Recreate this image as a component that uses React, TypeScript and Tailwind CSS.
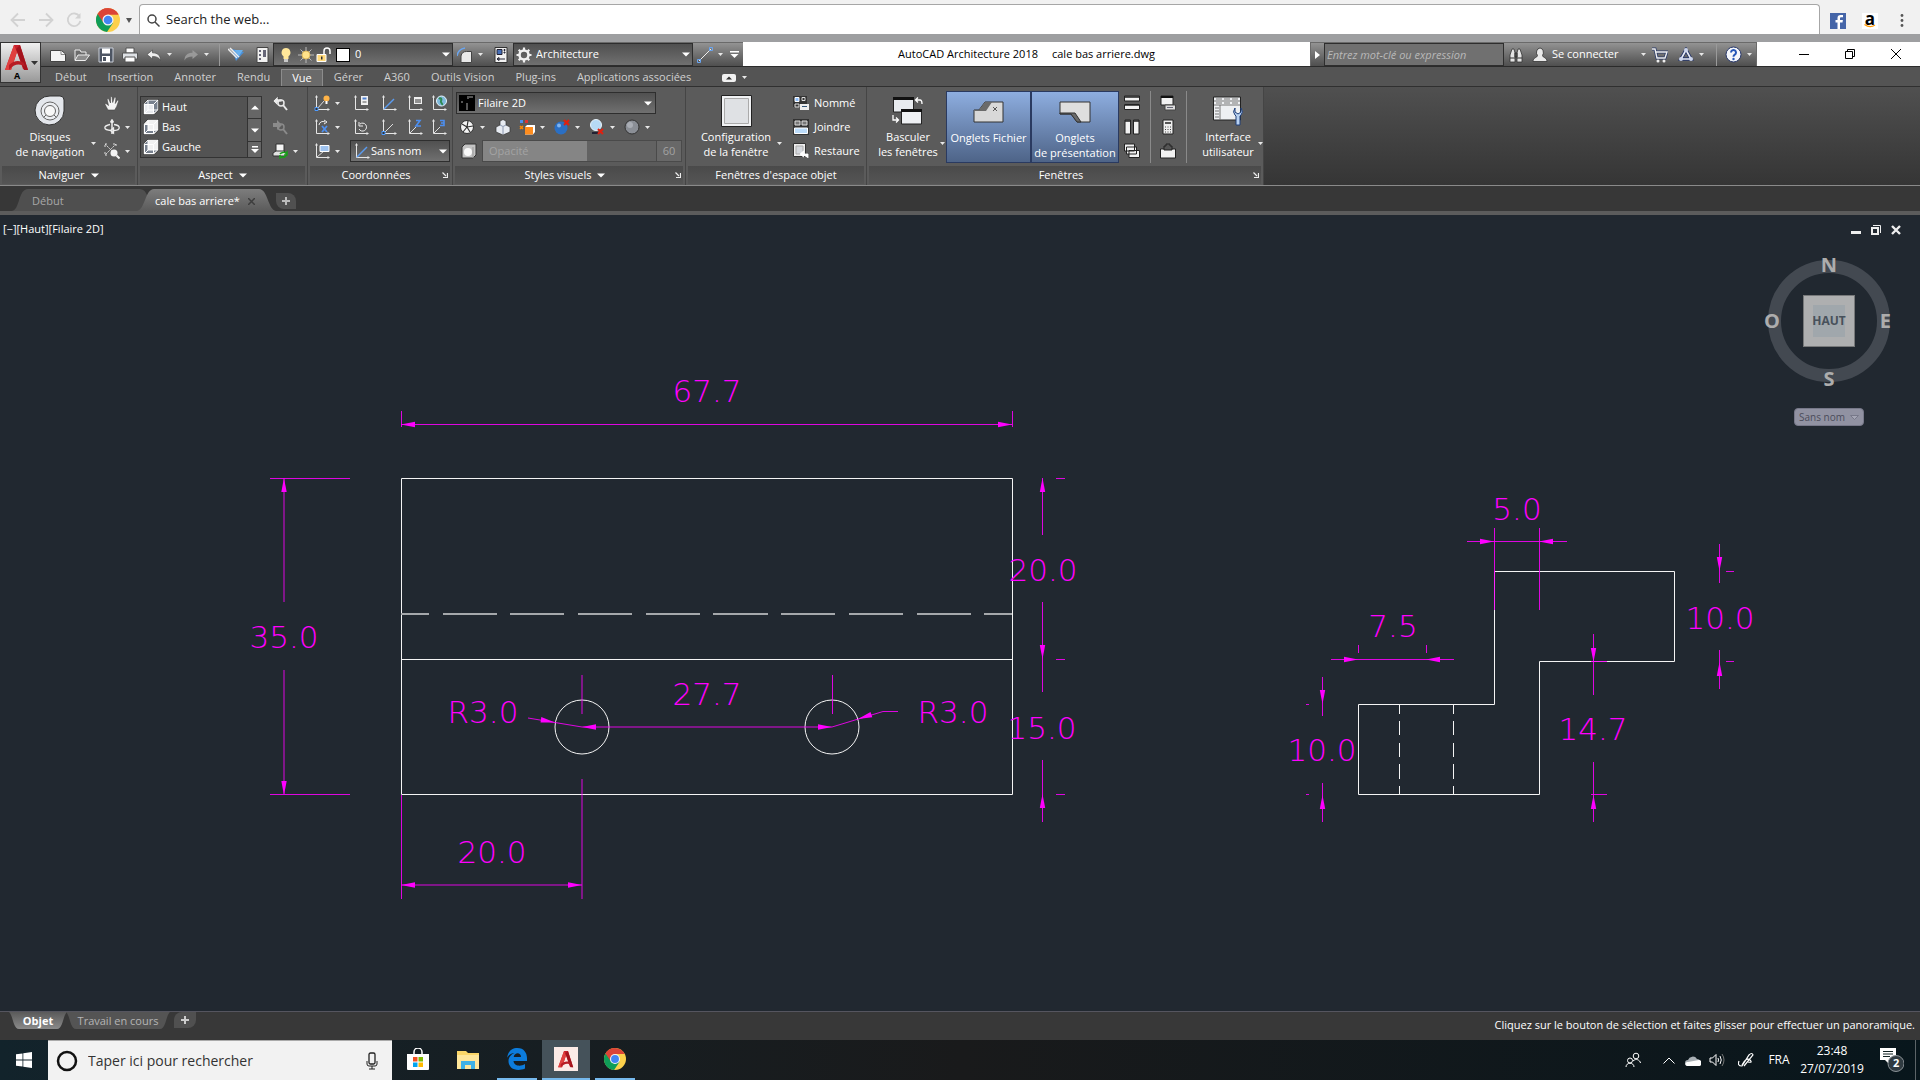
import React, { useState } from 'react'

type Kids = { children?: React.ReactNode }

function Ico({ children, s = 16 }: Kids & { s?: number }) {
  return <svg width={s} height={s} viewBox="0 0 16 16" fill="none" className="shrink-0" aria-hidden="true">{children}</svg>
}

function Caret({ big = false }: { big?: boolean }) {
  return big
    ? <svg width="8" height="5" viewBox="0 0 8 5" className="shrink-0" aria-hidden="true"><path d="M0 .5h8L4 4.5z" fill="#fff" /></svg>
    : <svg width="5" height="3" viewBox="0 0 5 3" className="shrink-0" aria-hidden="true"><path d="M0 0h5L2.500 3z" fill="#e8e8e8" /></svg>
}

function Btn({ label, children, className = 'w-6 h-6' }: Kids & { label: string; className?: string }) {
  return <button aria-label={label} className={'flex items-center justify-center shrink-0 ' + className}>{children}</button>
}

// icon button followed by its drop-down arrow
function Split({ label, children, className = 'w-[39px]' }: Kids & { label: string; className?: string }) {
  return <button aria-label={label} className={'flex items-center gap-[5px] pl-1 h-6 shrink-0 ' + className}>{children}<Caret /></button>
}

function Combo({ label, options, children, className }: Kids & { label: string; options: string[]; className: string }) {
  return (
    <div className={'flex items-center shrink-0 border border-[#2e2e2e] bg-linear-to-b from-[#505050] to-[#707070] ' + className}>
      {children}
      <select aria-label={label} className="appearance-none flex-1 min-w-0 bg-transparent text-white outline-none">
        {options.map(o => <option key={o}>{o}</option>)}
      </select>
      <Caret big />
    </div>
  )
}

function Chrome({ s }: { s: number }) {
  return (
    <svg width={s} height={s} viewBox="0 0 24 24" className="shrink-0" aria-hidden="true">
      <circle cx="12" cy="12" r="12" fill="#fcd04b" />
      <path d="M12 12L1.600 6A12 12 0 0 1 22.400 6.500H12z" fill="#db4437" />
      <path d="M1.600 6A12 12 0 0 0 11 24l6-9-5-3z" fill="#0f9d58" />
      <path d="M12 6.500h10.400A12 12 0 0 0 1.600 6L7 14z" fill="#db4437" />
      <circle cx="12" cy="12" r="5.500" fill="#f4f4f4" />
      <circle cx="12" cy="12" r="4.300" fill="#4285f4" />
    </svg>
  )
}

function BigA({ w, h }: { w: number; h: number }) {
  return (
    <svg width={w} height={h} viewBox="0 0 24 26" className="shrink-0" aria-hidden="true">
      <path d="M9 0h6l8 25-5-1L12 7 6 25H0z" fill="#c8202b" />
      <path d="M9 0l3 7-6 18H0z" fill="#e0403f" />
      <path d="M15 0l8 25h-4L11 4z" fill="#a3131c" />
      <path d="M4 20c5-5 11-5 15-2l1 4c-5-4-11-3-16 3z" fill="#b71c24" />
    </svg>
  )
}

function Axes({ children }: Kids) {
  return (
    <Ico>
      <path d="M2.500 1v13.500H15" stroke="#e6e6e6" />
      <path d="M1 2.500L2.500 0 4 2.500zM13.500 13L16 14.500 13.500 16z" fill="#e6e6e6" />
      {children}
    </Ico>
  )
}

function Cube({ face }: { face: string }) {
  return (
    <Ico>
      <path d="M1 5l4-4h10v10l-4 4H1z" fill="#77808e" stroke="#fff" />
      {face === 'top' && <path d="M1.500 5.500h9v9h-9z" fill="#e8eaee" />}
      {face === 'bottom' && <path d="M1 5l4-4h10v10l-4 1H5V5z" fill="#f2f2f2" />}
      {face === 'left' && <path d="M5 1h10v10H5z" fill="#f2f2f2" />}
      <path d="M1.500 5.500h9v9h-9zM5 1.500V11h10M10.500 5.500L15 1M1.500 14.500L5 11M10.500 14.500L15 11" stroke="#fff" />
      <path d="M.5 5l4-4.500h11V11l-4.500 4.500H.5z" stroke="#3a3a3a" strokeWidth=".6" />
    </Ico>
  )
}

function Panel({ title, arrow, launcher, className, children }: Kids & { title: string; arrow?: boolean; launcher?: boolean; className: string }) {
  return (
    <section className={'flex flex-col shrink-0 border-r border-[#454545] bg-[#5b5b5b] ' + className}>
      <div className="flex h-[79px] pt-1 pl-0.5">{children}</div>
      <div className="flex items-center h-[18px] mx-0.5 bg-linear-to-b from-[#4a4a4a] to-[#555]">
        <button className="flex-1 flex items-center justify-center gap-1.5 text-white">{title}{arrow && <Caret big />}</button>
        {launcher && (
          <button aria-label={title + ' : options'} className="pr-0.5">
            <svg width="6" height="6" viewBox="0 0 6 6" aria-hidden="true"><path d="M.5.500L4 4M5.500 1v4.500H1" stroke="#eee" fill="none" strokeWidth="1.200" /></svg>
          </button>
        )}
      </div>
    </section>
  )
}

function Tall({ lines, icon, active, caret, className }: { lines: string[]; icon: React.ReactNode; active?: boolean; caret?: boolean; className: string }) {
  const look = active ? 'border border-[#2a3a60] bg-linear-to-b from-[#8eaee0] to-[#4e6488]' : ''
  return (
    <button className={'relative flex flex-col items-center shrink-0 h-[72px] pt-0.5 text-white leading-[15px] ' + look + ' ' + className}>
      <span className="flex items-center justify-center h-9">{icon}</span>
      {lines.map(l => <span key={l} className="whitespace-nowrap">{l}</span>)}
      {caret && <span className="absolute right-0 bottom-[18px] leading-none flex"><Caret /></span>}
    </button>
  )
}

function Quick() {
  return (
    <div className="flex items-center shrink-0 pl-[5px] bg-linear-to-b from-[#939393] to-[#4f4f4f] border-t border-[#6a6a6a]">
      <Btn label="Nouveau"><Ico><path d="M.5 3.500h11l4 3.500v7.500H.5z" fill="#f4f4f4" stroke="#444" /><path d="M11 3.500V7.500h4" stroke="#888" /></Ico></Btn>
      <Btn label="Ouvrir"><Ico><path d="M1 13V3h5l1 2h5v3" stroke="#eee" fill="#6b6b6b" /><path d="M1 13.500L4 8h11.500l-4 5.500z" fill="#8d8d8d" stroke="#eee" /></Ico></Btn>
      <Btn label="Enregistrer"><Ico><path d="M1 1h14v14H1z" fill="#4d5563" stroke="#c9ced8" /><path d="M4 1.500h8v5H4z" fill="#fff" /><path d="M4 9h8v6H4z" fill="#fff" /><path d="M5 10h3v4H5z" fill="#4d5563" /></Ico></Btn>
      <Btn label="Imprimer"><Ico><path d="M4 1h8v5H4z" fill="#fff" stroke="#555" /><path d="M.5 6h15v6H.5z" fill="#dfe2e6" stroke="#555" /><path d="M3 10h10v5H3z" fill="#fff" stroke="#555" /></Ico></Btn>
      <Split label="Annuler" className="w-[37px]"><Ico><path d="M1 7.500L6.500 3v2.800c5 0 8 2.500 8 7.700-1.500-3-4-4-8-4V12z" fill="#eee" stroke="#4a4a4a" strokeWidth=".7" /></Ico></Split>
      <Split label="Rétablir" className="w-10"><Ico><path d="M15 7.500L9.500 3v2.800c-5 0-8 2.500-8 7.700 1.500-3 4-4 8-4V12z" fill="#999" /></Ico></Split>
      <span className="w-px h-[22px] bg-[#9a9a9a]" />
      <Btn label="Dessin" className="w-8 h-6"><Ico><path d="M4 2l4 12 8-9z" fill="#4a90d9" /><path d="M0 2l9 9M2 1l9 9" stroke="#eee" strokeWidth="1.500" /><path d="M6 3h9l-4 6z" fill="#69b1ee" /></Ico></Btn>
      <Btn label="Propriétés" className="w-5 h-6"><Ico><path d="M3 .5h11v15H3z" fill="#f1f1f1" stroke="#444" /><path d="M5 3h2v2H5zM5 7h2v2H5zM5 11h2v2H5zM9 3h3v7H9z" fill="#667" /></Ico></Btn>
      <Combo label="Calque" options={['0']} className="h-[23px] w-[180px] pl-1 pr-0.5 ml-px">
        <Ico><path d="M8 1a4.500 4.500 0 0 0-2.500 8.200V12h5V9.200A4.500 4.500 0 0 0 8 1z" fill="#ffe79a" /><path d="M6 12h4v3H6z" fill="#c9c9c9" /></Ico>
        <span className="w-1" />
        <Ico><path d="M8 0v16M0 8h16M2.500 2.500l11 11M13.500 2.500l-11 11" stroke="#bbb" /><circle cx="8" cy="8" r="4" fill="#ffe28a" stroke="#d9b65d" /></Ico>
        <span className="w-0.5" />
        <Ico><path d="M1 7.500h9v7H1z" fill="#ffd97a" stroke="#fff" /><path d="M8 7V4a3 3 0 0 1 6 0v3" stroke="#fff" strokeWidth="1.500" /><path d="M5 9.500h1.500v3H5z" fill="#333" /></Ico>
        <span className="w-3.5 h-3.5 bg-white border border-black ml-1 mr-[5px]" />
      </Combo>
      <Split label="Raccord" className="w-9"><Ico><path d="M4 15.500V9a5.500 5.500 0 0 1 5.500-4.500h5v11z" fill="#e9e9e9" stroke="#444" /><path d="M0 9a9 9 0 0 1 8-8" stroke="#6aa5f0" strokeWidth="1.500" /></Ico></Split>
      <Btn label="Style"><Ico><path d="M2 .5h12v15H2z" fill="#f2f2f2" stroke="#333" /><path d="M4 2.500h5v5H4z" fill="#466fb8" stroke="#223" /><path d="M11 2.500h1v1h-1zM11 5h1v1h-1zM4 12h8M4 12l2-1.500v3z" stroke="#223" /></Ico></Btn>
      <Combo label="Espace de travail" options={['Architecture']} className="h-[23px] w-[180px] pl-0.5 pr-0.5">
        <Ico><circle cx="8" cy="8" r="4.500" stroke="#f1f1f1" strokeWidth="2.600" /><path d="M8 .5v3M8 12.500v3M.5 8h3M12.500 8h3M2.700 2.700l2 2M11.300 11.300l2 2M13.300 2.700l-2 2M2.700 13.300l2-2" stroke="#f1f1f1" strokeWidth="2.200" /></Ico>
        <span className="w-1" />
      </Combo>
      <Split label="Ligne" className="w-[33px]"><Ico><path d="M2 14L14 2" stroke="#eee" /><path d="M.5 12.500h3v3h-3zM12.500.500h3v3h-3z" stroke="#6aa5f0" /></Ico></Split>
      <Btn label="Personnaliser" className="w-[17px] h-6"><svg width="9" height="7" viewBox="0 0 9 7" aria-hidden="true"><path d="M0 0h9v1.500H0zM.5 3h8l-4 4z" fill="#fff" /></svg></Btn>
    </div>
  )
}

function Info() {
  return (
    <div className="flex items-center shrink-0 w-[447px] bg-linear-to-b from-[#939393] to-[#4f4f4f] border-t border-x border-[#6a6a6a] text-white">
      <Btn label="Réduire la recherche" className="w-[13px] h-6"><svg width="5" height="8" viewBox="0 0 5 8" aria-hidden="true"><path d="M0 0l5 4-5 4z" fill="#fff" /></svg></Btn>
      <input aria-label="Recherche" placeholder="Entrez mot-clé ou expression" className="w-[180px] h-[23px] px-0.5 border border-[#2e2e2e] bg-[#707070] italic text-[11px] placeholder:text-[#b9b9b9] outline-none" />
      <Btn label="Rechercher"><Ico><path d="M2 15V8l2-6h2l1 4v9zM14 15V8l-2-6h-2L9 6v9z" fill="#e4e4e4" stroke="#333" strokeWidth=".8" /><path d="M7 6h2v4H7zM2 11h5M9 11h5" stroke="#333" /></Ico></Btn>
      <button className="flex items-center gap-1 w-[114px] ml-1 shrink-0">
        <Ico><path d="M8 1a3.500 4.500 0 0 1 2.500 7.500c0 2 4.500 2 4.500 6H1c0-4 4.500-4 4.500-6A4 4.500 0 0 1 8 1z" fill="#e9e9e9" stroke="#333" strokeWidth=".8" /></Ico>
        <span className="flex-1 text-left whitespace-nowrap">Se connecter</span>
        <Caret />
      </button>
      <Btn label="App Store" className="w-7 h-6"><Ico><path d="M0 2h3l2 9h8l2-6H4" stroke="#2c3c6a" strokeWidth="3" /><path d="M0 2h3l2 9h8l2-6H4" stroke="#eee" strokeWidth="1.400" /><circle cx="6" cy="14" r="1.500" fill="#eee" /><circle cx="12" cy="14" r="1.500" fill="#eee" /></Ico></Btn>
      <Split label="Autodesk 360" className="w-[42px]"><Ico><path d="M8 3l5 9H3z" stroke="#26366a" strokeWidth="3.500" /><path d="M8 3l5 9H3z" stroke="#e8ecf6" strokeWidth="1.600" /><circle cx="8" cy="3" r="2" fill="#cdd6ee" /><circle cx="3" cy="12" r="2" fill="#cdd6ee" /><circle cx="13" cy="12" r="2" fill="#cdd6ee" /></Ico></Split>
      <span className="w-px h-[22px] bg-[#9a9a9a]" />
      <Split label="Aide" className="w-[38px]"><svg width="17" height="17" viewBox="0 0 17 17" className="shrink-0 ml-1" aria-hidden="true"><circle cx="8.500" cy="8.500" r="7.500" fill="#f4f6fb" stroke="#26366a" /><path d="M6 6.500a2.500 2.500 0 1 1 3.800 2.200c-1 .6-1.300 1-1.300 2" fill="none" stroke="#2456b8" strokeWidth="2" /><circle cx="8.500" cy="13" r="1.200" fill="#2456b8" /></svg></Split>
    </div>
  )
}

const ribbonTabs = ['Début', 'Insertion', 'Annoter', 'Rendu', 'Vue', 'Gérer', 'A360', 'Outils Vision', 'Plug-ins', 'Applications associées']

function Ribbon() {
  const [opacity, setOpacity] = useState(60)
  return (
    <div className="flex h-[100px] border-t border-[#303030] border-b border-b-[#8a8a8a] bg-linear-to-b from-[#505050] to-[#353535]">
      <Panel title="Naviguer" arrow className="w-[138px]">
        <Tall caret className="w-[92px] ml-0.5" lines={['Disques', 'de navigation']} icon={
          <svg width="32" height="32" viewBox="0 0 32 32" aria-hidden="true"><path d="M16 1h10q4 0 4 4v11a14.500 14.500 0 1 1-14-15z" fill="#e4e7ec" stroke="#333" /><circle cx="16" cy="16" r="9" fill="#eceef2" stroke="#666" /><circle cx="16" cy="16" r="5.500" fill="#f8f8f8" stroke="#666" /><path d="M9.500 22.500l2.500-2.500M22.500 22.500L20 20" stroke="#666" /></svg>
        } />
        <div className="flex flex-col pl-1">
          <Btn label="Panoramique"><Ico><path d="M4 15L1 9.500 2 8.500l2.500 2L3 4l1.500-.5L6.500 8 6.500 1.500H8l.7 6L10.500 2l1.500.5-.7 6L13.500 5l1.200.7-2 5.800-2 3.500z" fill="#f3f3f3" stroke="#444" strokeWidth=".6" /></Ico></Btn>
          <Split label="Orbite"><Ico><path d="M8 1v14M6.500 3.500L8 1l1.500 2.500" stroke="#eee" strokeWidth="1.500" /><path d="M6 5.500C-1 7-1 11 7 11.500M10 5.500c7 1 7 5.500 0 6M9.500 9v5l-3-2.500z" stroke="#eee" strokeWidth="1.300" /></Ico></Split>
          <Split label="Zoom"><Ico><path d="M1 4V1h3M1 1l9 9M9 1h3v3M12 1L1 12M1 9v3h3" stroke="#ddd" strokeDasharray="2 1" /><circle cx="10" cy="10" r="3.500" fill="#f3f3f3" /><path d="M12.500 12.500L15.500 15.500" stroke="#f3f3f3" strokeWidth="2" /></Ico></Split>
        </div>
      </Panel>

      <Panel title="Aspect" arrow className="w-[170px]">
        <div className="flex mt-[5px] h-[62px] w-[124px] border border-[#333] bg-[#535353]">
          <div className="flex-1 flex flex-col text-white">
            <button className="flex items-center gap-[3px] pl-0.5 h-5"><Cube face="top" />Haut</button>
            <button className="flex items-center gap-[3px] pl-0.5 h-5"><Cube face="bottom" />Bas</button>
            <button className="flex items-center gap-[3px] pl-0.5 h-5"><Cube face="left" />Gauche</button>
          </div>
          <div className="flex flex-col w-3.5 border-l border-[#333] bg-[#666]">
            <Btn label="Vue précédente" className="h-[22px] border-b border-[#333]"><span className="rotate-180"><Caret big /></span></Btn>
            <Btn label="Vue suivante" className="h-[23px] border-b border-[#333]"><Caret big /></Btn>
            <Btn label="Toutes les vues" className="flex-1"><svg width="8" height="8" viewBox="0 0 8 8" aria-hidden="true"><path d="M1 0h6v1.500H1zM0 3h8L4 7z" fill="#fff" /></svg></Btn>
          </div>
        </div>
        <div className="flex flex-col pl-1.5">
          <Btn label="Aspect précédent"><Ico><path d="M1 6l5-5v3h4v3H6v4z" fill="#e9e9e9" stroke="#444" strokeWidth=".6" /><circle cx="9" cy="8" r="3" stroke="#e9e9e9" strokeWidth="1.500" /><path d="M11 10l4 5" stroke="#e9e9e9" strokeWidth="2" /></Ico></Btn>
          <Btn label="Aspect suivant"><Ico><path d="M10 6L5 1v3H1v4h4v3z" fill="#8b8b8b" /><circle cx="9" cy="8" r="3" stroke="#8b8b8b" strokeWidth="1.500" /><path d="M11 10l4 5" stroke="#8b8b8b" strokeWidth="2" /></Ico></Btn>
          <Split label="Gestionnaire de vues"><Ico><path d="M4 1h8v8H4z" fill="#f5f5f5" stroke="#333" /><path d="M1 10l3-2h8l2 2v3H1z" fill="#e2e2e2" stroke="#333" /><path d="M8 11a4 3 0 0 1 6-1l1-1v3h-3M14 13a4 3 0 0 1-5 1l-1 1v-3" stroke="#18a018" strokeWidth="1.500" /></Ico></Split>
        </div>
      </Panel>

      <Panel title="Coordonnées" launcher className="w-[145px]">
        <div className="flex flex-col w-full">
          <div className="flex">
            <Split label="SCU"><Axes><path d="M3 14L10 6" stroke="#ddd" /><path d="M1 12.500h3v3H1z" fill="#333" stroke="#4d9bff" /><circle cx="12.500" cy="3.500" r="3" fill="#ffb347" /><path d="M11.500 6h2v3h-2z" fill="#fff" /></Axes></Split>
            <Btn label="SCU nommé"><Axes><path d="M8 1h7v9H8z" fill="#f0f0f0" /><path d="M9.500 2.500h4v2h-4z" fill="#4d7fd0" /><path d="M9.500 7h4" stroke="#555" /></Axes></Btn>
            <Btn label="Général" className="w-8 h-6"><Axes><path d="M3 14L13 4" stroke="#5b9bf0" strokeWidth="1.400" /></Axes></Btn>
            <Btn label="Icône SCU" className="w-5 h-6"><Axes><path d="M7 2h8v7H7z" fill="#f0f0f0" /><path d="M8 5h6M8 7h6" stroke="#333" /></Axes></Btn>
            <Btn label="Monde" className="w-7 h-6"><Axes><circle cx="10.500" cy="6" r="5" fill="#7fb9dc" stroke="#e8f4fb" /><path d="M8 4c2-2 3 0 2 2s2 2 1 4" stroke="#2f8a55" strokeWidth="2" /></Axes></Btn>
          </div>
          <div className="flex">
            <Split label="Rotation X"><Axes><path d="M5 6a4 4 0 0 1 6-3M10 1l3 2-3 2" stroke="#eee" /><path d="M8 7l5 6M13 7l-5 6" stroke="#4d8ff0" strokeWidth="1.800" /></Axes></Split>
            <Btn label="SCU précédent"><Axes><path d="M6 10a4 4 0 1 0 1-5M6 3v4h4" stroke="#eee" /></Axes></Btn>
            <Btn label="Origine" className="w-8 h-6"><Axes><path d="M3 14L12 5" stroke="#ddd" /><path d="M1 12.500h3v3H1z" fill="#333" stroke="#4d9bff" /></Axes></Btn>
            <Btn label="Axe Z" className="w-5 h-6"><Axes><path d="M3 14L9 8" stroke="#ddd" /><path d="M9 1.500h4L9 7h5" stroke="#4d8ff0" strokeWidth="1.600" /></Axes></Btn>
            <Btn label="3 points" className="w-7 h-6"><Axes><path d="M3 14L9 8" stroke="#ddd" /><path d="M9 1.500h4v5H9M10 4h3" stroke="#4d8ff0" strokeWidth="1.600" /></Axes></Btn>
          </div>
          <div className="flex">
            <Split label="Vue"><Axes><path d="M3 14L10 8" stroke="#ddd" /><path d="M6 2.500h9v6H6z" fill="#9fc3ef" stroke="#fff" /></Axes></Split>
            <Combo label="SCU" options={['Sans nom']} className="h-[22px] w-[100px] mt-px ml-px pl-[3px] pr-0.5"><Axes><path d="M3 14L13 4" stroke="#5b9bf0" strokeWidth="1.400" /></Axes><span className="w-px" /></Combo>
          </div>
        </div>
      </Panel>

      <Panel title="Styles visuels" arrow launcher className="w-[233px]">
        <div className="flex flex-col w-full">
          <Combo label="Style visuel" options={['Filaire 2D']} className="h-[22px] w-[200px] ml-px mt-px pl-0.5 pr-[3px]">
            <svg width="16" height="16" viewBox="0 0 16 16" aria-hidden="true"><path d="M0 0h16v16H0z" fill="#000" /><path d="M2 7h2M8 15V8M8 2h6M9 3v1" stroke="#aaa" /></svg>
            <span className="w-[3px]" />
          </Combo>
          <div className="flex mt-px">
            <Split label="Ombres" className="w-[35px]"><Ico><circle cx="8" cy="8" r="6.500" fill="#f4f4f4" stroke="#333" /><path d="M8 8L3 5M8 8l1-6M8 8l6-1M8 8l3 5M8 8l-4 5" stroke="#333" strokeWidth="1.200" /></Ico></Split>
            <Btn label="Rayon X" className="w-[25px] h-6"><Ico><path d="M1 8l4-2V2l3-1.500L11 2v4l4 2v5l-7 3-7-3z" fill="#e7ebf2" stroke="#333" strokeWidth=".7" /><path d="M5 6l3 1.500L11 6M8 8v7" stroke="#8a97b0" /></Ico></Btn>
            <Split label="Couleurs" className="w-[35px]"><Ico><path d="M1 1h3v3H1z" fill="#4d8ff0" /><path d="M6 1h3v3H6z" fill="#d33" /><path d="M1 7l3 3M4 7l-3 3" stroke="#f80" strokeWidth="1.500" /><path d="M6 8l2-2h8v7l-2 2.500H6z" fill="#fff" /><path d="M6 8h8v7.500H6z" fill="#ff8d1e" /></Ico></Split>
            <Split label="Matériaux" className="w-[35px]"><Ico><circle cx="7" cy="9" r="6.500" fill="#2a6fc4" /><circle cx="5" cy="6.500" r="2" fill="#7fb3ee" /><path d="M10 1l5 5M15 1l-5 5" stroke="#e02010" strokeWidth="2" /></Ico></Split>
            <Split label="Lumières" className="w-[35px]"><Ico><circle cx="7" cy="6" r="5.500" fill="#b7daf5" stroke="#e9f4fc" /><path d="M3 13h6v2H3z" fill="#223" /><path d="M9 10l5 5M14 10l-5 5" stroke="#e02010" strokeWidth="2" /></Ico></Split>
            <Split label="Fond" className="w-[35px]"><Ico><circle cx="8" cy="8" r="7" fill="#8b8f96" stroke="#333" /><circle cx="6" cy="6" r="3" fill="#a9adb4" /></Ico></Split>
          </div>
          <div className="flex items-center">
            <Btn label="Opacité des faces" className="w-[27px] h-6"><Ico><path d="M1 4l3-3h11v11l-3 3H1z" fill="#c4c4c4" stroke="#333" /><circle cx="7" cy="9" r="4" fill="#fafafa" /><path d="M12 4v11" stroke="#999" /></Ico></Btn>
            <div className="relative flex w-[200px] h-[22px] border border-[#4a4a4a] text-[#a3a3a3]">
              <input id="opacity" type="range" value={opacity} onChange={e => setOpacity(Number(e.target.value))} className="appearance-none w-[173px] h-5 bg-[linear-gradient(to_right,#858585_60%,#626262_60%)] [&::-webkit-slider-thumb]:appearance-none [&::-webkit-slider-thumb]:w-0" />
              <label htmlFor="opacity" className="absolute left-1.5 top-0.5">Opacité</label>
              <output className="flex-1 text-center leading-5 border-l border-[#4a4a4a] bg-[#686868]">{opacity}</output>
            </div>
          </div>
        </div>
      </Panel>

      <Panel title="Fenêtres d'espace objet" className="w-[181px]">
        <Tall caret className="w-[92px] ml-0.5" lines={['Configuration', 'de la fenêtre']} icon={
          <svg width="31" height="32" viewBox="0 0 31 32" aria-hidden="true"><path d="M.5.500h30v31H.5z" fill="#f1f2f4" stroke="#222" /><path d="M3.500 3.500h24v25h-24z" fill="#dfe1e4" stroke="#aaa" /></svg>
        } />
        <div className="flex flex-col pl-[11px] text-white">
          <button className="flex items-center gap-[5px] h-6"><Ico><path d="M0 1h14v11H0z" fill="#333" /><path d="M2 2.500h4v4H2z" fill="#8fc0ff" stroke="#fff" /><path d="M9 2.500h3v3H9zM2 9h4v3H2z" stroke="#ddd" /><path d="M7 9h9v6H7z" fill="#eee" /><path d="M9 11.500h5" stroke="#357" /></Ico>Nommé</button>
          <button className="flex items-center gap-[5px] h-6"><Ico><path d="M0 0h16v16H0z" fill="#333" /><path d="M2 2h5v4H2zM9 2h5v4H9z" fill="#777" stroke="#ddd" /><path d="M1.500 9h13v5.500h-13z" fill="#bcdcfa" stroke="#fff" /></Ico>Joindre</button>
          <button className="flex items-center gap-[5px] h-6"><Ico><path d="M.5.500h12v13H.5z" fill="#eee" stroke="#333" /><path d="M3 3h7v8H3z" fill="#d5d8dd" stroke="#aaa" /><path d="M15 15v-4H8M10.500 8L7 11l3.500 3z" stroke="#fff" fill="#fff" strokeWidth=".8" /></Ico>Restaure</button>
        </div>
      </Panel>

      <Panel title="Fenêtres" launcher className="w-[397px]">
        <Tall caret className="w-[74px] ml-0.5" lines={['Basculer', 'les fenêtres']} icon={
          <svg width="32" height="32" viewBox="0 0 32 32" aria-hidden="true"><path d="M1.500 3h20v14h-20z" fill="#e8ebef" stroke="#222" /><path d="M1 2h21v3H1z" fill="#111" /><path d="M9.500 15h20v14h-20z" fill="#eef0f3" stroke="#222" /><path d="M9 14h21v3H9z" fill="#111" /><path d="M24 5h4q2 0 2 4M26 2.500L23.500 5 26 7.500M1 20v5h5M4 22.500L6.500 25 4 27.500" stroke="#fff" fill="none" strokeWidth="1.300" /></svg>
        } />
        <Tall active className="w-[85px] ml-px" lines={['Onglets Fichier']} icon={
          <svg width="32" height="24" viewBox="0 0 32 24" aria-hidden="true"><path d="M1 10h5l6-8h18v20H1z" fill="#d8d8d8" stroke="#333" /><path d="M1 10h5l6-8h7l-6 9H1z" fill="#6a6a6a" /><path d="M20 7l4 4M24 7l-4 4" stroke="#555" /></svg>
        } />
        <Tall active className="w-[88px]" lines={['Onglets', 'de présentation']} icon={
          <svg width="32" height="24" viewBox="0 0 32 24" aria-hidden="true"><path d="M1 2h30v20H18l-6-8H1z" fill="#dedede" stroke="#333" /><path d="M1 14h11l6 8h4l-6-9H1z" fill="#6a6a6a" stroke="#333" /></svg>
        } />
        <div className="flex flex-col pl-px">
          <Btn label="Mosaïque horizontale"><Ico><path d="M.5 1h15v5H.5zM.5 9.500h15v5H.5z" fill="#f2f2f2" stroke="#222" /><path d="M1 2h14M1 10h14" stroke="#222" strokeWidth="1.500" /></Ico></Btn>
          <Btn label="Mosaïque verticale"><Ico><path d="M1 1h5.500v14H1zM9.500 1H15v14H9.500z" fill="#f2f2f2" stroke="#222" /><path d="M1 2h5.500M9.500 2H15" stroke="#222" strokeWidth="1.500" /></Ico></Btn>
          <Btn label="Cascade"><Ico><path d="M.5 1h10v7H.5zM2.500 4h10v7h-10zM5 7.500h10.500v7H5z" fill="#f2f2f2" stroke="#222" /></Ico></Btn>
        </div>
        <span className="w-px h-[72px] bg-[#8a8a8a] ml-1.5 mr-[5px]" />
        <div className="flex flex-col">
          <Btn label="Ligne de commande"><Ico><path d="M1 1h12v9H1z" fill="#f2f2f2" stroke="#222" /><path d="M1 2h12" stroke="#111" strokeWidth="2" /><path d="M5 10h10.500v5H5z" fill="#ddd" stroke="#444" /><path d="M7 12.500h6" stroke="#667" /></Ico></Btn>
          <Btn label="Calculatrice"><Ico><path d="M3 1h10v14H3z" fill="#eee" stroke="#222" /><path d="M5 3h6v2H5z" fill="#555" /><path d="M5 8h6M5 10.500h6M5 13h6" stroke="#444" strokeDasharray="1 1.500" /></Ico></Btn>
          <Btn label="Presse-papiers"><Ico><path d="M.5 6h15v9H.5z" fill="#f2f2f2" stroke="#222" /><path d="M6 3V1h4v2h2v4H4V3z" fill="#555" stroke="#222" /></Ico></Btn>
        </div>
        <span className="w-px h-[72px] bg-[#8a8a8a] ml-1.5" />
        <Tall caret className="w-[70px] ml-1.5" lines={['Interface', 'utilisateur']} icon={
          <svg width="32" height="32" viewBox="0 0 32 32" aria-hidden="true"><path d="M1.500 2h27v23h-27z" fill="#eef0f3" stroke="#222" /><path d="M2 6h26M2 10h26M8 10v15" stroke="#777" /><path d="M4 4h6M12 4h6M20 4h6M4 8h6M12 8h6M20 8h6M3 13h4M3 16h4M3 19h4M3 22h4" stroke="#777" /><path d="M23 13v4l3 2 3-2v-4q3 4 0 7l-1 1v9h-4v-9l-1-1q-3-3 0-7z" fill="#b9d2f2" stroke="#1f3e78" /></svg>
        } />
      </Panel>
    </div>
  )
}

function FileTabs() {
  return (
    <div className="flex h-[25px] pt-[3px] bg-[#373737] text-white">
      <button className="relative flex items-center w-[125px] ml-5 pl-3 pt-0.5 text-[#a8a8a8]">
        <svg viewBox="0 0 125 22" preserveAspectRatio="none" className="absolute inset-0 w-full h-full overflow-visible" aria-hidden="true"><path d="M-8 22C0 21-2 0 8 0h112q6 0 8 10l4 12z" fill="#4f4f4f" /></svg>
        <span className="relative">Début</span>
      </button>
      <div className="relative flex items-center w-[125px] pl-2.5 pt-0.5">
        <svg viewBox="0 0 125 22" preserveAspectRatio="none" className="absolute inset-0 w-full h-full overflow-visible" aria-hidden="true">
          <defs><linearGradient id="tab" x1="0" y1="0" x2="0" y2="1"><stop offset="0" stopColor="#7d7d7d" /><stop offset="1" stopColor="#5b5b5b" /></linearGradient></defs>
          <path d="M-8 22C0 21 0 0 9 0h105c9 0 9 21 17 22z" fill="url(#tab)" />
        </svg>
        <button className="relative whitespace-nowrap">cale bas arriere*</button>
        <button aria-label="Fermer l'onglet" className="relative ml-2"><svg width="7" height="7" viewBox="0 0 7 7" aria-hidden="true"><path d="M0 0l7 7M7 0L0 7" stroke="#3d3d3d" strokeWidth="1.500" /></svg></button>
      </div>
      <button aria-label="Nouvel onglet" className="flex items-center justify-center w-5 h-4 ml-1.5 mt-1 rounded-tr-lg rounded-bl-lg bg-[#505050]">
        <svg width="8" height="8" viewBox="0 0 8 8" aria-hidden="true"><path d="M4 0v8M0 4h8" stroke="#bbb" strokeWidth="2" /></svg>
      </button>
    </div>
  )
}

function Arrow({ x, y, d }: { x: number; y: number; d: 'l' | 'r' | 'u' | 'd' }) {
  const a = { l: 0, u: 90, r: 180, d: 270 }[d]
  return <path transform={`translate(${x} ${y}) rotate(${a})`} d="M0 0L14-2.700V2.700z" fill="#f0f" />
}

const dims = [
  { t: '67.7', x: 707, y: 402 },
  { t: '35.0', x: 284, y: 648 },
  { t: 'R3.0', x: 483, y: 723 },
  { t: '27.7', x: 707, y: 705 },
  { t: '20.0', x: 492, y: 863 },
  { t: '20.0', x: 1043, y: 581 },
  { t: '15.0', x: 1042, y: 739 },
  { t: 'R3.0', x: 953, y: 723 },
  { t: '5.0', x: 1517, y: 520 },
  { t: '7.5', x: 1393, y: 637 },
  { t: '10.0', x: 1322, y: 761 },
  { t: '14.7', x: 1593, y: 740 },
  { t: '10.0', x: 1720, y: 629 },
]

function Plan() {
  return (
    <svg viewBox="0 215 1920 796" fill="none" className="block w-full" role="img" aria-label="cale bas arriere">
      <g stroke="#f4f4f4">
        <path d="M401.500 478.500h611v316h-611zM401.500 659.500h611" />
        <path d="M401 614h28M443 614h54M510 614h54M578 614h54M646 614h54M713 614h55M781 614h54M849 614h54M917 614h54M984 614h28" stroke="#a5a8ab" strokeWidth="2" />
        <circle cx="582" cy="727" r="27" />
        <circle cx="832" cy="727" r="27" />
        <path d="M1494.500 571.500h180v90h-135v133h-181v-90h136z" />
        <path d="M1399.500 704v10m0 7v14m0 8v14m0 7v15m0 7v9M1453.500 704v10m0 7v14m0 8v14m0 7v15m0 7v9" />
      </g>
      <g stroke="#f0f" strokeOpacity=".85">
        <path d="M401.500 411v16M1012.500 411v16M401 424.500h611" />
        <path d="M270 478.500h80M270 794.500h80M284 478v124M284 670v124" />
        <path d="M528 718l27 4.500 27 4.500h250l51-15.500h15" />
        <path d="M582 675v39M832.500 675v39M582 779v120M401.500 795v104M401 885h181" />
        <path d="M1042.500 478v57M1042.500 602v90M1042.500 760v62M1056 478.500h9M1056 659.500h9M1056 794.500h9" />
        <path d="M1494.500 528v82M1539.500 528v82M1467 541.500h100" />
        <path d="M1358.500 645v8M1426.500 645v8M1331 659.500h123" />
        <path d="M1322.500 677v39M1322.500 783v39M1306 704.500h3M1306 794.500h3" />
        <path d="M1593.500 634v61M1593.500 762v60M1591 661.500h16M1591 794.500h16" />
        <path d="M1719.500 544v39M1719.500 650v39M1726 571.500h8M1726 661.500h8" />
      </g>
      <Arrow x={401} y={424.5} d="l" /><Arrow x={1012} y={424.5} d="r" />
      <Arrow x={284} y={478} d="u" /><Arrow x={284} y={795} d="d" />
      <Arrow x={401} y={885} d="l" /><Arrow x={582} y={885} d="r" />
      <Arrow x={582} y={727} d="l" /><Arrow x={832} y={727} d="r" />
      <path d="M555 722.500l-14.500 0 .800-5.500zM858 719l12.500-7 1.800 5.300z" fill="#f0f" />
      <Arrow x={1042.5} y={478} d="u" /><Arrow x={1042.5} y={659} d="d" /><Arrow x={1042.5} y={794} d="u" />
      <Arrow x={1494} y={541.5} d="r" /><Arrow x={1539} y={541.5} d="l" />
      <Arrow x={1358} y={659.5} d="r" /><Arrow x={1426} y={659.5} d="l" />
      <Arrow x={1322.5} y={704} d="d" /><Arrow x={1322.5} y={795} d="u" />
      <Arrow x={1593.5} y={662} d="d" /><Arrow x={1593.5} y={795} d="u" />
      <Arrow x={1719.5} y={571} d="d" /><Arrow x={1719.5} y={662} d="u" />
      <g fill="#f0f" textAnchor="middle" className="font-['DejaVu_Sans',sans-serif] font-extralight text-[31px]">
        {dims.map((d, i) => <text key={i} x={d.x} y={d.y}>{d.t}</text>)}
      </g>
    </svg>
  )
}

function ViewCube() {
  return (
    <div className="absolute right-[18px] top-2 w-[146px] flex flex-col items-center">
      <div className="flex self-end gap-2 pt-px text-white">
        <Btn label="Réduire la fenêtre" className="w-3 h-3"><svg width="10" height="10" viewBox="0 0 10 10" aria-hidden="true"><path d="M0 6h10v3H0z" fill="#eee" /></svg></Btn>
        <Btn label="Agrandir la fenêtre" className="w-3 h-3"><svg width="10" height="10" viewBox="0 0 10 10" fill="none" aria-hidden="true"><path d="M1 3h6v6H1z" stroke="#eee" strokeWidth="2" /><path d="M2 .5h7.500V8" stroke="#eee" /></svg></Btn>
        <Btn label="Fermer la fenêtre" className="w-3 h-3"><svg width="10" height="10" viewBox="0 0 10 10" aria-hidden="true"><path d="M1 1l8 8M9 1L1 9" stroke="#eee" strokeWidth="2.400" /></svg></Btn>
      </div>
      <div className="w-[122px] h-[122px] mt-6 rounded-full border-[13px] border-[#434951]">
        <div className="relative flex items-center justify-center w-full h-full text-[#adadad] text-[20px] leading-5 font-bold">
          <span className="absolute -top-[18px]">N</span>
          <span className="absolute -bottom-5">S</span>
          <span className="absolute -left-[17px]">O</span>
          <span className="absolute -right-[14px]">E</span>
          <button className="flex items-center justify-center w-[52px] h-[52px] border border-[#77797a] bg-[#aeafb0]">
            <span className="flex items-center justify-center w-8 h-8 bg-[#a0a7ac] text-[#48515b] text-[12px]">HAUT</span>
          </button>
        </div>
      </div>
      <button className="flex items-center justify-between w-[70px] h-[18px] mt-[26px] px-1 rounded border border-[#777889] bg-[#9192a2] text-[#4b4c5a] text-[10px]">
        Sans nom
        <svg width="9" height="5" viewBox="0 0 9 5" aria-hidden="true"><path d="M.5.500h8l-4 4z" fill="#a5a6b5" stroke="#777889" /></svg>
      </button>
    </div>
  )
}

function Layouts() {
  return (
    <div className="flex h-[29px] border-t border-[#55555f] bg-[#383838]">
      <button className="relative w-[58px] h-[17px] ml-[9px] text-white font-bold leading-[15px]">
        <svg viewBox="0 0 58 17" preserveAspectRatio="none" className="absolute inset-0 w-full h-full" aria-hidden="true">
          <defs><linearGradient id="sheet" x1="0" y1="0" x2="0" y2="1"><stop offset="0" stopColor="#5a5a5a" /><stop offset="1" stopColor="#8a8a8a" /></linearGradient></defs>
          <path d="M0 0h58c-4 3-4 17-10 17H10C4 17 4 3 0 0z" fill="url(#sheet)" />
        </svg>
        <span className="relative">Objet</span>
      </button>
      <button className="relative w-[104px] h-[17px] -ml-px text-[#b5b5b5] leading-[15px] whitespace-nowrap">
        <svg viewBox="0 0 104 17" preserveAspectRatio="none" className="absolute inset-0 w-full h-full" aria-hidden="true"><path d="M0 0h104c-4 3-4 17-10 17H10C4 17 4 3 0 0z" fill="#545454" /></svg>
        <span className="relative">Travail en cours</span>
      </button>
      <button aria-label="Nouvelle présentation" className="flex items-center justify-center w-[22px] h-4 ml-1 rounded-tl-lg rounded-br-lg bg-[#505050]">
        <svg width="8" height="8" viewBox="0 0 8 8" aria-hidden="true"><path d="M4 0v8M0 4h8" stroke="#ccc" strokeWidth="2" /></svg>
      </button>
      <p className="ml-auto pr-[5px] pt-[5px] text-white whitespace-nowrap">Cliquez sur le bouton de sélection et faites glisser pour effectuer un panoramique.</p>
    </div>
  )
}

function Taskbar() {
  return (
    <footer className="flex items-center h-10 bg-linear-to-r from-[#12232b] via-[#191a1b] to-[#08161c] text-white text-[12px]">
      <Btn label="Démarrer" className="w-12 h-10"><Ico><path d="M0 2.300l6.500-.9v6.100H0zM7.300 1.300L16 0v7.500H7.300zM0 8.500h6.500v6.100L0 13.700zM7.300 8.500H16V16l-8.700-1.300z" fill="#fff" /></Ico></Btn>
      <div className="flex items-center h-10 w-[344px] shrink-0 pl-2 pr-3 bg-[#f2f2f2] border-t border-[#aaa]">
        <svg width="22" height="22" viewBox="0 0 22 22" aria-hidden="true"><circle cx="11" cy="11" r="9" fill="none" stroke="#111" strokeWidth="2.500" /></svg>
        <input aria-label="Recherche Windows" placeholder="Taper ici pour rechercher" className="flex-1 min-w-0 pl-2.5 text-[14px] placeholder:text-[#333] bg-transparent outline-none" />
        <svg width="16" height="18" viewBox="0 0 16 18" fill="none" stroke="#222" aria-hidden="true"><rect x="5" y="1" width="6" height="11" rx="1.500" strokeWidth="1.300" /><path d="M3 9v3q0 2 2 2h6q2 0 2-2V9M8 14v3M5 17h6" /></svg>
      </div>
      <Btn label="Microsoft Store" className="w-12 h-10 ml-0.5">
        <svg width="24" height="24" viewBox="0 0 24 24" aria-hidden="true"><path d="M8 6V4a4 4 0 0 1 8 0v2" fill="none" stroke="#fff" strokeWidth="1.500" /><path d="M1 6h22v15q0 1-1 1H2q-1 0-1-1z" fill="#fff" /><path d="M7 9h4.500v4.500H7z" fill="#f25022" /><path d="M12.500 9H17v4.500h-4.500z" fill="#7fba00" /><path d="M7 14.500h4.500V19H7z" fill="#00a4ef" /><path d="M12.500 14.500H17V19h-4.500z" fill="#ffb900" /></svg>
      </Btn>
      <Btn label="Explorateur de fichiers" className="w-[52px] h-10">
        <svg width="22" height="20" viewBox="0 0 22 20" aria-hidden="true"><path d="M0 1h9l2 2h11v16H0z" fill="#fbd668" /><path d="M0 5h22v14H0z" fill="#ffe69a" /><path d="M4 19v-8h14v8h-4v-4H8v4z" fill="#3fb2e6" /></svg>
      </Btn>
      <Btn label="Edge" className="w-10 h-10 ml-[3px] border-b-2 border-[#76b9ed]">
        <svg width="20" height="22" viewBox="0 0 20 22" aria-hidden="true"><path d="M0 10C1 3 5 0 10.500 0 17 0 20 5 20 10v3H6.500c.3 5 7 6 11.500 3v4.500C10 24 1.500 21 1.500 13c0-4 3-7 6-8C4 5 1 7.500 0 10zm6.700-1h7.300c0-5-6.500-5-7.300 0z" fill="#0c7cdc" /></svg>
      </Btn>
      <Btn label="AutoCAD" className="w-12 h-10 ml-[5px] bg-[#45525a] border-b-2 border-[#76b9ed]">
        <span className="flex items-center justify-center w-6 h-6 bg-[#fbeae6]"><BigA w={16} h={17} /></span>
      </Btn>
      <Btn label="Chrome" className="w-10 h-10 ml-[5px] border-b-2 border-[#76b9ed]"><Chrome s={22} /></Btn>

      <div className="flex items-center ml-auto shrink-0">
        <Btn label="Contacts" className="w-[50px] h-10"><Ico><circle cx="11" cy="4" r="2.800" stroke="#fff" /><circle cx="5" cy="8.500" r="2.500" stroke="#fff" /><path d="M1 15c0-5 8-5 8 0M8 9c3-3 7-1 7.500 2" stroke="#fff" /></Ico></Btn>
        <Btn label="Icônes masquées" className="w-[22px] h-10"><svg width="12" height="7" viewBox="0 0 12 7" fill="none" aria-hidden="true"><path d="M.5 6.500l5.500-5.500 5.500 5.500" stroke="#fff" /></svg></Btn>
        <Btn label="OneDrive" className="w-[26px] h-10"><svg width="16" height="11" viewBox="0 0 16 11" className="shrink-0" aria-hidden="true"><path d="M3 11a3 3 0 0 1 0-6A5 5 0 0 1 12 4a3.600 3.600 0 0 1 1 7z" fill="#a9b0b5" /><path d="M2 11a2 2 0 0 1 1-4c4-1 7-1 11-2a3 3 0 0 1-1 6z" fill="#fff" /></svg></Btn>
        <Btn label="Volume" className="w-[22px] h-10"><Ico><path d="M1 6h2.500L7 2.500v11L3.500 10H1z" stroke="#fff" /><path d="M9 6q1 2 0 4M11 4q2.500 4 0 8" stroke="#fff" /><path d="M13 2q4 6 0 12" stroke="#777" /></Ico></Btn>
        <Btn label="Windows Ink" className="w-9 h-10"><Ico><path d="M1 9q-2 5 3 5l7-11q3-3 4 0L6 14M4 13q4-8 8-5 3 3-2 2" stroke="#fff" strokeWidth="1.200" /></Ico></Btn>
        <button className="w-[30px] h-10">FRA</button>
        <button className="flex flex-col items-center w-[76px] leading-[18px]"><span>23:48</span><span>27/07/2019</span></button>
        <Btn label="Notifications" className="w-11 h-10 relative">
          <svg width="24" height="24" viewBox="0 0 24 24" aria-hidden="true"><path d="M0 0h16v12H9v4l-4-4H0z" fill="#fff" /><path d="M3 3.500h10M3 6h10M3 8.500h7" stroke="#122" /><circle cx="16" cy="15.500" r="8" fill="#303b41" stroke="#8b9297" /></svg>
          <span className="absolute left-[23px] top-[15px] text-[11px] font-bold leading-4">2</span>
        </Btn>
        <span className="w-px h-10 ml-px mr-1 bg-[#5c6468]" />
      </div>
    </footer>
  )
}

export default function App() {
  return (
    <div className="flex flex-col min-h-screen font-['Open_Sans',sans-serif] text-[11px] bg-[#212830]">
      <header className="flex h-[34px] bg-[#f1f1f1]">
        <div className="flex items-center pl-2.5 gap-3 w-[139px] shrink-0 pt-1.5">
          <Btn label="Retour" className="w-4 h-6"><Ico><path d="M15 8H2M8 1.500L1.500 8 8 14.500" stroke="#d2d2d2" strokeWidth="1.800" /></Ico></Btn>
          <Btn label="Suivant" className="w-4 h-6"><Ico><path d="M1 8h13M8 1.500L14.500 8 8 14.500" stroke="#d2d2d2" strokeWidth="1.800" /></Ico></Btn>
          <Btn label="Actualiser" className="w-4 h-6"><Ico><path d="M13.500 4.500a6.300 6.300 0 1 0 .8 4.500" stroke="#d2d2d2" strokeWidth="1.800" /><path d="M14.500 1v5.500H9z" fill="#d2d2d2" /></Ico></Btn>
          <button aria-label="Chrome" className="flex items-center gap-1.5 ml-0.5"><Chrome s={24} /><svg width="6" height="5" viewBox="0 0 6 5" aria-hidden="true"><path d="M0 0h6L3 5z" fill="#555" /></svg></button>
        </div>
        <div className="flex items-center flex-1 mt-1 pl-[7px] pt-px gap-[6px] bg-white border border-b-0 border-[#a6a6a6] rounded-t">
          <svg width="13" height="13" viewBox="0 0 13 13" fill="none" stroke="#444" strokeWidth="1.500" aria-hidden="true"><circle cx="5" cy="5" r="4" /><path d="M8 8l4.500 4.500" /></svg>
          <input aria-label="Search the web" placeholder="Search the web..." className="flex-1 text-[13px] placeholder:text-[#222] outline-none" />
        </div>
        <div className="flex items-center w-[100px] shrink-0 pt-2">
          <Btn label="Facebook" className="w-9 h-6"><Ico><path d="M0 0h16v16H0z" fill="#4565a8" /><path d="M10 16V9.500h2.500l.4-2.500H10V5.500c0-.8.3-1.200 1.400-1.200H13V2h-2.300C8.500 2 7.500 3.200 7.500 5v2h-2v2.500h2V16z" fill="#fff" /></Ico></Btn>
          <Btn label="Amazon" className="w-7 h-6"><span className="flex flex-col items-center w-4 h-4 bg-white text-black"><span className="text-[17px] font-bold leading-[11px]">a</span><svg width="12" height="4" viewBox="0 0 12 4" fill="none" aria-hidden="true"><path d="M.5.500q5.500 4 10.500.500" stroke="#f90" strokeWidth="1.300" /></svg></span></Btn>
          <Btn label="Menu" className="w-9 h-6"><Ico><circle cx="8" cy="2.500" r="1.400" fill="#555" /><circle cx="8" cy="7.500" r="1.400" fill="#555" /><circle cx="8" cy="12.500" r="1.400" fill="#555" /></Ico></Btn>
        </div>
      </header>
      <div className="h-2 bg-[#9e9fa1]" />

      <div className="flex bg-[#545454]">
        <button aria-label="Menu de l'application" className="flex items-center gap-0.5 w-[41px] h-[41px] pl-1 shrink-0 border border-[#333] bg-linear-to-b from-[#f0f0f0] to-[#999] text-black font-bold leading-[10px]">
          <span className="flex flex-col items-center text-[9px]"><BigA w={24} h={26} />A</span>
          <svg width="7" height="4" viewBox="0 0 7 4" aria-hidden="true"><path d="M0 0h7L3.500 4z" fill="#333" /></svg>
        </button>
        <div className="flex-1 min-w-0">
          <div className="flex h-[25px] bg-white border-b border-[#2b2b2b]">
            <Quick />
            <h1 className="flex-1 flex items-center justify-center gap-3.5 text-black whitespace-nowrap"><span>AutoCAD Architecture 2018</span><span>cale bas arriere.dwg</span></h1>
            <Info />
            <div className="flex ml-6 pr-px">
              <Btn label="Réduire" className="w-[46px] h-6"><svg width="10" height="10" viewBox="0 0 10 10" aria-hidden="true"><path d="M0 5.500h10" stroke="#000" /></svg></Btn>
              <Btn label="Niveau inférieur" className="w-[46px] h-6"><svg width="10" height="10" viewBox="0 0 10 10" fill="none" stroke="#000" aria-hidden="true"><path d="M.5 2.500h7v7h-7zM2.500 2V.5h7v7H8" /></svg></Btn>
              <Btn label="Fermer" className="w-[46px] h-6"><svg width="10" height="10" viewBox="0 0 10 10" aria-hidden="true"><path d="M0 0l10 10M10 0L0 10" stroke="#000" /></svg></Btn>
            </div>
          </div>
          <nav className="flex gap-px h-[19px] pl-1 pt-0.5 text-[#d0d0d0]">
            {ribbonTabs.map(t => (
              <button key={t} className={t === 'Vue' ? 'px-2.5 whitespace-nowrap bg-[#6a6a6a] border border-b-0 border-[#8c8c8c] text-white' : 'px-2.5 whitespace-nowrap'}>{t}</button>
            ))}
            <button aria-label="Réduire le ruban" className="flex items-center gap-1.5 ml-5">
              <svg width="14" height="8" viewBox="0 0 14 8" aria-hidden="true"><rect width="14" height="8" rx="2" fill="#f1f1f1" /><path d="M4 5.500h6L7 2.500z" fill="#333" /></svg>
              <Caret />
            </button>
          </nav>
        </div>
      </div>
      <Ribbon />
      <FileTabs />
      <div className="h-1 bg-[#5c5c5c]" />
      <main className="relative flex-1 overflow-hidden">
        <Plan />
        <p className="absolute left-[3px] top-1.5 text-white">[−][Haut][Filaire 2D]</p>
        <ViewCube />
      </main>
      <Layouts />
      <Taskbar />
    </div>
  )
}
